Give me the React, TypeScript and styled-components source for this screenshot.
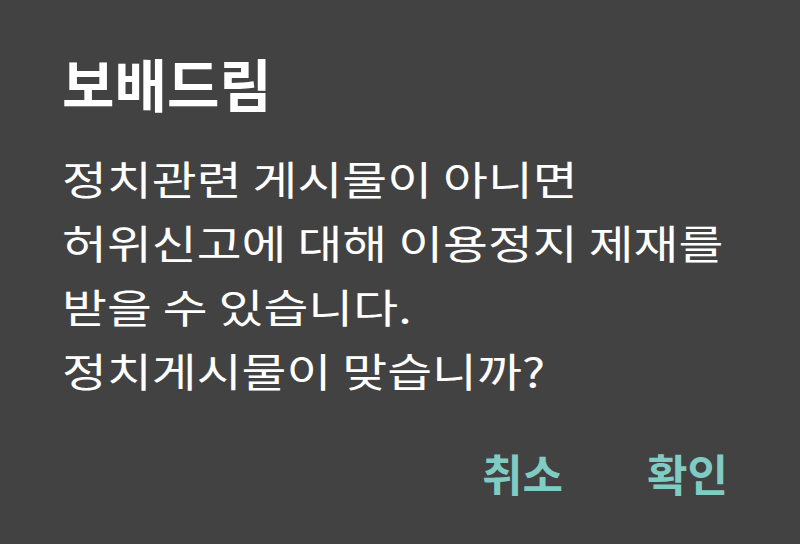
import styled, { createGlobalStyle } from 'styled-components';

const GlobalStyle = createGlobalStyle`
  html, body {
    margin: 0;
    padding: 0;
    background: #424242;
  }
  body {
    font-family: 'Noto Sans CJK KR', 'Noto Sans', sans-serif;
  }
`;

const Dialog = styled.div`
  width: 800px;
  height: 544px;
  box-sizing: border-box;
  background: #424242;
  display: flex;
  flex-direction: column;
  padding: 44px 72px 0 62px;
  overflow: hidden;
`;

const Title = styled.h1`
  margin: 0;
  font-size: 57px;
  font-weight: 700;
  line-height: 76px;
  color: #ffffff;
`;

// the message face in the shot is noticeably wider than tall
const Message = styled.p`
  align-self: flex-start;
  margin: 26px 0 0;
  font-size: 40px;
  line-height: 64px;
  color: #ffffff;
  white-space: nowrap;
  transform: scaleX(1.22);
  transform-origin: left center;
`;

const Actions = styled.div`
  display: flex;
  justify-content: flex-end;
  gap: 84px;
  margin-top: 43px;
`;

const ActionButton = styled.button`
  background: none;
  border: none;
  padding: 0;
  font-family: inherit;
  font-size: 44px;
  font-weight: 700;
  line-height: 56px;
  color: #80cbc4;
  cursor: pointer;
`;

const lines = [
  '정치관련 게시물이 아니면',
  '허위신고에 대해 이용정지 제재를',
  '받을 수 있습니다.',
  '정치게시물이 맞습니까?',
];

export default function App() {
  return (
    <>
      <GlobalStyle />
      <Dialog>
        <Title>보배드림</Title>
        <Message>
          {lines.map((line, i) => (
            <span key={i}>
              {line}
              {i < lines.length - 1 && <br />}
            </span>
          ))}
        </Message>
        <Actions>
          <ActionButton>취소</ActionButton>
          <ActionButton>확인</ActionButton>
        </Actions>
      </Dialog>
    </>
  );
}
